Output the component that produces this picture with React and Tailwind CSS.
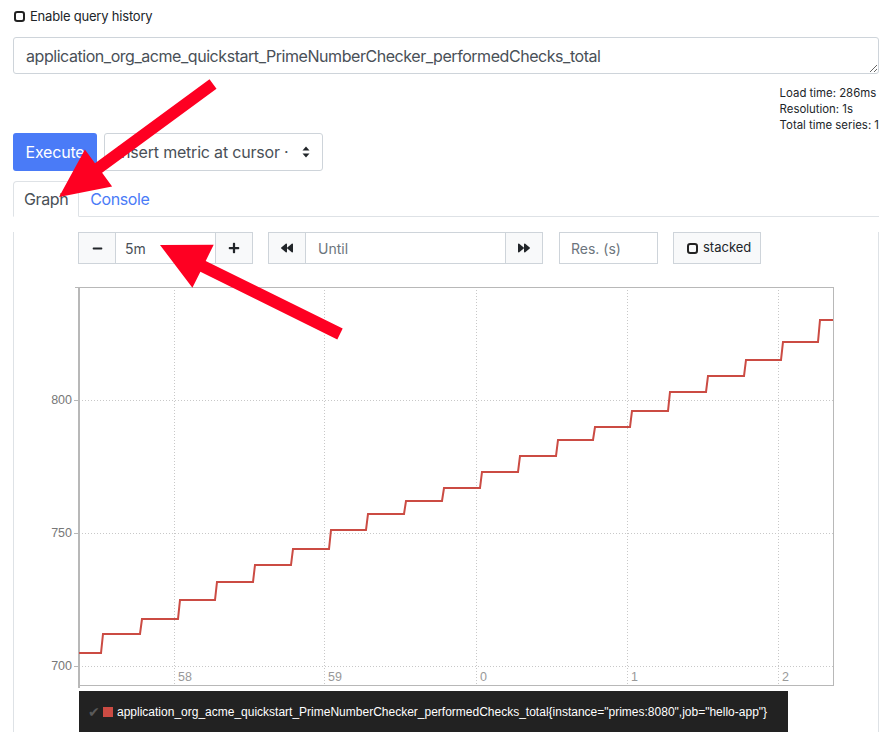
import React from "react";
import { FaMinus, FaPlus, FaBackward, FaForward } from "react-icons/fa";

const stepsX = [101, 140, 178, 215, 253, 291, 329, 366, 404, 442, 480, 518, 556, 593, 630, 668, 706, 744, 781, 818];
const levels = [653, 634, 619, 600, 582, 565, 549, 530, 514, 501, 488, 472, 456, 440, 427, 411, 392, 376, 360, 342, 320];

function seriesPath() {
  let d = `M79 ${levels[0]}`;
  stepsX.forEach((x, i) => {
    d += ` L${x} ${levels[i]} L${x + 2} ${levels[i + 1]}`;
  });
  d += ` L833 ${levels[levels.length - 1]}`;
  return d;
}

function arrowPoints(tail, tip, shaft, headLen, headHalf) {
  const dx = tip[0] - tail[0];
  const dy = tip[1] - tail[1];
  const len = Math.hypot(dx, dy);
  const ux = dx / len;
  const uy = dy / len;
  const px = -uy;
  const py = ux;
  const bx = tip[0] - ux * headLen;
  const by = tip[1] - uy * headLen;
  const s = shaft / 2;
  const pts = [
    [tail[0] + px * s, tail[1] + py * s],
    [bx + px * s, by + py * s],
    [bx + px * headHalf, by + py * headHalf],
    tip,
    [bx - px * headHalf, by - py * headHalf],
    [bx - px * s, by - py * s],
    [tail[0] - px * s, tail[1] - py * s],
  ];
  return pts.map((p) => `${p[0].toFixed(1)},${p[1].toFixed(1)}`).join(" ");
}

function CheckSquare() {
  return (
    <svg width="11" height="11" viewBox="0 0 11 11" className="block">
      <rect x="1" y="1" width="9" height="9" rx="2.2" fill="none" stroke="#222" strokeWidth="2" />
    </svg>
  );
}

function Chart() {
  const hGrid = [400.5, 533.5, 666.5];
  const vGrid = [174.5, 324.5, 476.5, 627.5, 778.5];
  const xLabels = [
    [178, "58"],
    [328, "59"],
    [480, "0"],
    [631, "1"],
    [782, "2"],
  ];
  return (
    <svg width="864" height="420" viewBox="14 270 864 420" className="block">
      {hGrid.map((y) => (
        <line key={y} x1="79" x2="833" y1={y} y2={y} stroke="#c8c8c8" strokeWidth="1" strokeDasharray="1 2" />
      ))}
      {vGrid.map((x) => (
        <line key={x} x1={x} x2={x} y1="287" y2="685" stroke="#c8c8c8" strokeWidth="1" strokeDasharray="1 2" />
      ))}
      <line x1="75" x2="834" y1="287.5" y2="287.5" stroke="#b8b8b8" strokeWidth="1" />
      <line x1="833.5" x2="833.5" y1="287" y2="686" stroke="#b8b8b8" strokeWidth="1" />
      <line x1="78" x2="834" y1="685.5" y2="685.5" stroke="#b8b8b8" strokeWidth="1" />
      <line x1="79" x2="79" y1="287" y2="688" stroke="#b8b8b8" strokeWidth="2" />
      {hGrid.map((y) => (
        <line key={"t" + y} x1="74" x2="79" y1={y} y2={y} stroke="#b8b8b8" strokeWidth="1" />
      ))}
      {[["800", 404], ["750", 537], ["700", 670]].map(([t, y]) => (
        <text key={t} x="72" y={y} textAnchor="end" fontSize="12.5" fill="#777" fontFamily="Liberation Sans, Arial, sans-serif">
          {t}
        </text>
      ))}
      {xLabels.map(([x, t]) => (
        <text key={t} x={x} y="681" fontSize="12.5" fill="#999" fontFamily="Liberation Sans, Arial, sans-serif">
          {t}
        </text>
      ))}
      <path d={seriesPath()} fill="none" stroke="#cb4b43" strokeWidth="2" strokeLinejoin="miter" />
    </svg>
  );
}

function CtrlBtn({ children, className = "" }) {
  return (
    <div className={"flex h-full w-[38px] items-center justify-center border border-[#ced4da] bg-[#f8f9fa] text-[#212529] " + className}>
      {children}
    </div>
  );
}

export default function App() {
  return (
    <div className="relative h-[732px] w-[885px] overflow-hidden bg-white font-[family-name:Inter,sans-serif] text-[#212529]">
      <div className="pl-[13px] pr-[6px] pt-[9px]">
        <label className="flex h-[14px] items-center gap-[5px] text-[13px] leading-[14px] tracking-[-0.2px] text-[#212529]">
          <span className="ml-[1px] flex items-center">
            <CheckSquare />
          </span>
          <span>Enable query history</span>
        </label>
        <textarea
          className="mt-[14px] block h-[37px] w-full resize-y rounded-[3px] border border-[#ced4da] px-[12px] py-[6px] text-[16px] leading-[24px] tracking-[-0.45px] text-[#495057] outline-none"
          defaultValue="application_org_acme_quickstart_PrimeNumberChecker_performedChecks_total"
          spellCheck={false}
        />
        <div className="mt-[11px] flex justify-end">
          <div className="text-[11.4px] leading-[16px] text-[#212529]">
            <div>Load time: 286ms</div>
            <div>Resolution: 1s</div>
            <div className="whitespace-nowrap">Total time series: 1</div>
          </div>
        </div>
        <div className="flex h-[38px] items-center gap-[7px]">
          <div className="flex h-full w-[84px] items-center justify-center rounded-[3px] bg-[#4a7bf7] text-[16px] tracking-[-0.2px] text-white">
            Execute
          </div>
          <div className="flex h-full w-[219px] items-center justify-between rounded-[3px] border border-[#ced4da] pl-[12px] pr-[12px] text-[16px] tracking-[-0.2px] text-[#495057]">
            <span>Insert metric at cursor ·</span>
            <svg width="8" height="12" viewBox="0 0 8 12">
              <path d="M4 0.5 L7.5 4.5 L0.5 4.5 Z" fill="#212529" />
              <path d="M4 11.5 L7.5 7.5 L0.5 7.5 Z" fill="#212529" />
            </svg>
          </div>
        </div>
        <div className="mt-[10px] flex border-b border-[#dee2e6] tracking-[-0.4px]">
          <div className="-mb-px flex h-[36px] items-center rounded-t-[4px] border border-[#dee2e6] border-b-white bg-white px-[10px] text-[16px] text-[#495057]">
            Graph
          </div>
          <div className="flex h-[35px] items-center px-[11px] text-[16px] text-[#4a7bf7]">Console</div>
        </div>
        <div className="h-[600px] border-x border-[#dee2e6]">
          <div className="mt-[15px] flex h-[32px] items-stretch pl-[64px] text-[14px]">
            <div className="flex h-[32px]">
              <CtrlBtn>
                <FaMinus size={11} />
              </CtrlBtn>
              <div className="flex w-[99px] items-center border-y border-[#ced4da] px-[9px] text-[#495057]">5m</div>
              <CtrlBtn>
                <FaPlus size={12} />
              </CtrlBtn>
            </div>
            <div className="ml-[15px] flex h-[32px]">
              <CtrlBtn>
                <FaBackward size={12} />
              </CtrlBtn>
              <div className="flex w-[199px] items-center border-y border-[#ced4da] px-[12px] text-[#6c757d]">Until</div>
              <CtrlBtn className="w-[37px]">
                <FaForward size={12} />
              </CtrlBtn>
            </div>
            <div className="ml-[16px] flex h-[32px] w-[99px] items-center border border-[#ced4da] px-[11px] text-[#6c757d]">
              Res. (s)
            </div>
            <div className="ml-[15px] flex h-[32px] w-[88px] items-center gap-[5px] border border-[#ced4da] bg-[#f8f9fa] pl-[13px] text-[13px] text-[#212529]">
              <CheckSquare />
              <span>stacked</span>
            </div>
          </div>
          <div className="mt-[6px]">
            <Chart />
          </div>
          <div className="ml-[65px] mt-[1px] flex h-[50px] w-[709px] items-start bg-[#222222] pl-[9px] pt-[14px] font-[family-name:'Liberation_Sans',Arial,sans-serif] text-[12px] leading-[14px] text-white">
            <span className="mr-[3px] text-[14px] leading-[14px] text-[#5a5a5a]">✔</span>
            <span className="mr-[4px] mt-[2px] inline-block h-[10px] w-[10px] bg-[#cb4b43]" />
            <span className="whitespace-nowrap">
              application_org_acme_quickstart_PrimeNumberChecker_performedChecks_total{'{'}instance="primes:8080",job="hello-app"{'}'}
            </span>
          </div>
        </div>
      </div>
      <svg className="pointer-events-none absolute left-0 top-0" width="885" height="732" viewBox="0 0 885 732">
        <polygon points={arrowPoints([213, 84], [59, 197], 12, 49, 23)} fill="#fe0022" />
        <polygon points={arrowPoints([340, 334], [160, 245], 12, 48, 24)} fill="#fe0022" />
      </svg>
    </div>
  );
}
